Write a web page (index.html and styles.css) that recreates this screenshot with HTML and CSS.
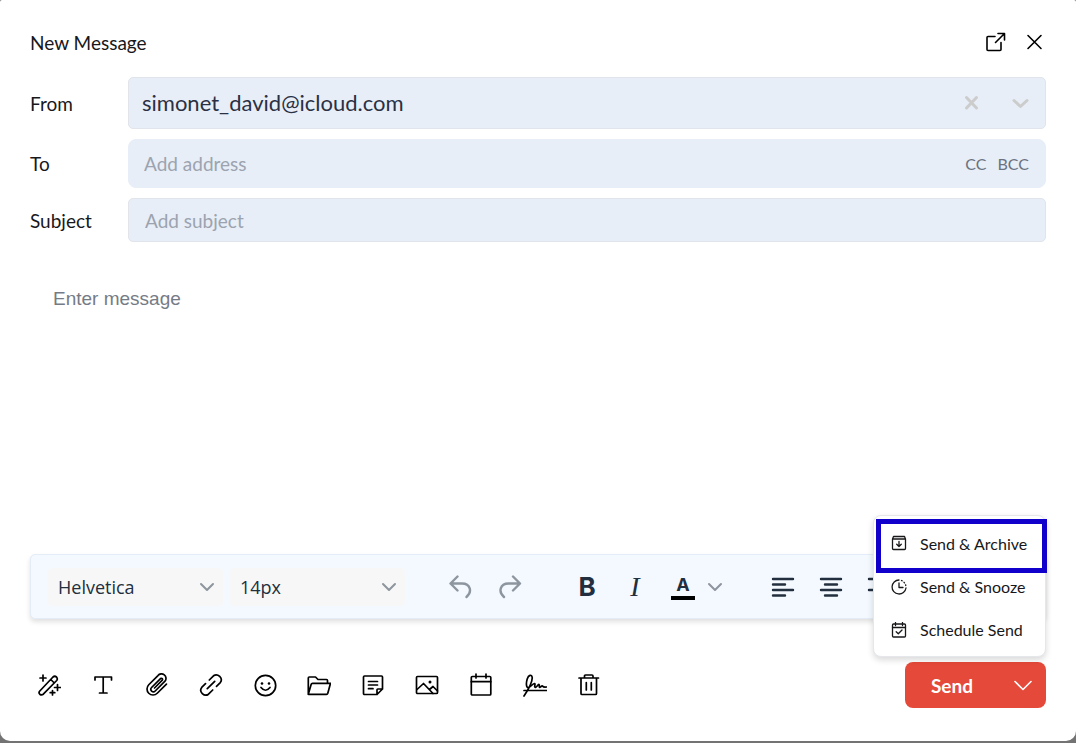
FILE: index.html
```html
<!DOCTYPE html>
<html lang="en">
  <head>
    <meta charset="UTF-8" />
    <meta name="viewport" content="width=device-width, initial-scale=1.0" />
    <title>New Message</title>
    <link rel="stylesheet" href="styles.css" />
  </head>
  <body>
    <main class="composer">
      <header class="composer-header">
        <h1>New Message</h1>
        <div class="window-buttons">
          <button class="icon-button" type="button" aria-label="Open in new window">
            <svg class="icon" viewBox="0 0 24 24"><path d="M12 6.500H5Q4 6.500 4 7.500V19.500Q4 20.500 5 20.500H17Q18 20.500 18 19.500V12.500M15 3.500H21.500V10M21 4L12.500 12.500" /></svg>
          </button>
          <button class="icon-button" type="button" aria-label="Close">
            <svg class="icon" viewBox="0 0 24 24"><path d="M6 5.500L19 18.500M19 5.500L6 18.500" /></svg>
          </button>
        </div>
      </header>

      <!-- Address fields -->
      <div class="fields">
        <label for="from">From</label>
        <div class="field from-field">
          <select class="from-select" id="from">
            <option>simonet_david@icloud.com</option>
          </select>
          <div class="field-icons">
            <svg class="icon" viewBox="0 0 24 24"><path d="M7.500 6.500L17.500 17M17.500 6.500L7.500 17" /></svg>
            <svg class="icon" viewBox="0 0 24 24"><path d="M6 9.500L12.500 15.500L19 9.500" /></svg>
          </div>
        </div>

        <label for="to">To</label>
        <div class="field to-field">
          <input type="text" id="to" placeholder="Add address" />
          <button class="cc-button" type="button">CC</button>
          <button class="cc-button" type="button">BCC</button>
        </div>

        <label for="subject">Subject</label>
        <div class="field subject-field">
          <input type="text" id="subject" placeholder="Add subject" />
        </div>
      </div>

      <textarea class="message" aria-label="Message" placeholder="Enter message"></textarea>

      <!-- Formatting toolbar -->
      <div class="toolbar">
        <div class="toolbar-selects">
          <div class="select-box">
            <select aria-label="Font">
              <option>Helvetica</option>
            </select>
            <svg class="icon chevron" viewBox="0 0 16 16"><path d="M2 5L8 11L14 5" /></svg>
          </div>
          <div class="select-box">
            <select aria-label="Font size">
              <option>14px</option>
            </select>
            <svg class="icon chevron" viewBox="0 0 16 16"><path d="M2 5L8 11L14 5" /></svg>
          </div>
        </div>
        <div class="toolbar-group history">
          <button type="button" aria-label="Undo">
            <svg class="icon" viewBox="0 0 24 24"><path d="M8.500 1.500L1.500 8.500L8.500 15.500M2 8.500H13C21.500 8.500 23.500 17 17.500 22" /></svg>
          </button>
          <button type="button" aria-label="Redo">
            <svg class="icon" viewBox="0 0 24 24"><path d="M14 1.500L21 8.500L14 15.500M20.500 8.500H9.500C1 8.500 -1 17 5 22" /></svg>
          </button>
        </div>
        <div class="toolbar-group">
          <button class="bold" type="button" aria-label="Bold">B</button>
          <button class="italic" type="button" aria-label="Italic">I</button>
          <div class="color-picker">
            <button type="button" aria-label="Text color"><span class="text-color">A</span></button>
            <button class="color-toggle" type="button" aria-label="Choose color">
              <svg class="icon chevron" viewBox="0 0 16 16"><path d="M2 5L8 11L14 5" /></svg>
            </button>
          </div>
        </div>
        <div class="toolbar-group align">
          <button type="button" aria-label="Align left">
            <svg class="icon" viewBox="0 0 24 24"><path d="M2 4H22M2 9.500H14M2 15H22M2 20.500H14" /></svg>
          </button>
          <button type="button" aria-label="Align center">
            <svg class="icon" viewBox="0 0 24 24"><path d="M2 4H22M6 9.500H18M2 15H22M6 20.500H18" /></svg>
          </button>
          <button type="button" aria-label="Align right">
            <svg class="icon" viewBox="0 0 24 24"><path d="M2 4H22M10 9.500H22M2 15H22M10 20.500H22" /></svg>
          </button>
        </div>
      </div>

      <!-- Bottom actions -->
      <footer class="actions">
        <div class="action-icons">
          <button class="icon-button" type="button" aria-label="Write with AI">
            <svg class="icon" viewBox="0 0 24 24"><path d="M2.800 18L16 4Q17.700 2.500 19.500 4Q21 5.800 19.700 7.500L6.300 21.200Q4.500 22.500 2.800 21.200Q1.300 19.700 2.800 18ZM13.800 6.500L17.300 10M6 2V8M3 5H9M20.500 11.500V17.500M17.500 14.500H23.500M15.500 17.500V22M13.200 19.700H17.800" /></svg>
          </button>
          <button class="icon-button" type="button" aria-label="Text formatting">
            <svg class="icon" viewBox="0 0 24 24"><path d="M4 7V4H20.500V7M12.200 4V20M8.500 20H16" /></svg>
          </button>
          <button class="icon-button" type="button" aria-label="Attach file">
            <svg class="icon" viewBox="0 0 24 24"><path d="M21.440 11.050L12.250 20.240A6 6 0 0 1 3.760 11.750L12.950 2.560A4 4 0 0 1 20 8.200L10.200 18A2.500 2.500 0 0 1 6.600 14.500L15.500 5.600C17 4.800 18 6 17.300 7.200L9.500 15" /></svg>
          </button>
          <button class="icon-button" type="button" aria-label="Insert link">
            <svg class="icon" viewBox="0 0 24 24"><path d="M10.300 7L14.500 2.800C18.700 -.200 24.500 5.200 21.300 9.600L17.500 13.300M13.700 17L9.500 21.200C5.300 24.200 -.500 18.800 2.700 14.400L6.500 10.700M8.300 15.700L15.700 8.300" /></svg>
          </button>
          <button class="icon-button" type="button" aria-label="Insert emoji">
            <svg class="icon" viewBox="0 0 24 24"><circle cx="12.500" cy="12.500" r="10.200" /><path d="M8 14.500Q12.500 20 17 14.500" /><circle class="dot" cx="9" cy="10.500" r="1.300" /><circle class="dot" cx="16" cy="10.500" r="1.300" /></svg>
          </button>
          <button class="icon-button" type="button" aria-label="Open files">
            <svg class="icon" viewBox="0 0 24 24"><path d="M1.300 21V5Q1.300 4 2.300 4H8.500L11 6.500H19.500Q20.500 6.500 20.500 7.500V10M1.300 21.300H19.500Q20.500 21.300 20.800 20.300L23.500 10.300H5.500Q4.500 10.300 4.200 11.300Z" /></svg>
          </button>
          <button class="icon-button" type="button" aria-label="Insert template">
            <svg class="icon" viewBox="0 0 24 24"><path d="M16 21.500H3.500Q2.500 21.500 2.500 20.500V4Q2.500 3 3.500 3H20.500Q21.500 3 21.500 4V16ZM16 21.500V16.800Q16 16 16.800 16H21.500M7.500 8.500H16.500M7.500 12H16.500M7.500 15.700H12" /></svg>
          </button>
          <button class="icon-button" type="button" aria-label="Insert image">
            <svg class="icon" viewBox="0 0 24 24"><rect x="1.500" y="3.500" width="21" height="17" rx="1" /><path d="M2 16.500L8.500 10.500L18 20.500M14.500 16.500L18 13.500L22.500 18" /><circle class="dot" cx="15" cy="9" r="1.500" /></svg>
          </button>
          <button class="icon-button" type="button" aria-label="Insert event">
            <svg class="icon" viewBox="0 0 24 24"><rect x="2.300" y="3.500" width="19.500" height="18.500" rx="1" /><path d="M2.300 8.700H21.800M7 1V5M17 1V5" /></svg>
          </button>
          <button class="icon-button" type="button" aria-label="Insert signature">
            <svg class="icon" viewBox="0 0 24 24"><path d="M1 17.500H24M1 23C5 17 9.500 9 9.200 4.500C8.700 1 5.500 2 4.200 6C3 10 3 15 5.500 14.500C8 14 9 11 11.500 10.500C13 10.500 10.500 14.500 12.500 14.300C14 14 15 11 16 11.500C17 12 15.500 14.500 17 14.300C18 14 18.500 12.500 19.500 13Q20.500 14.500 23.500 14" /></svg>
          </button>
          <button class="icon-button" type="button" aria-label="Discard draft">
            <svg class="icon" viewBox="0 0 24 24"><path d="M2 5H21.500M4 5V20.500Q4 21.500 5 21.500H18.500Q19.500 21.500 19.500 20.500V5M7.500 5V3Q7.500 2 8.500 2H15Q16 2 16 3V5M9.300 9.500V17M14.300 9.500V17" /></svg>
          </button>
        </div>

        <div class="send">
          <button class="send-button" type="button">Send</button>
          <button class="send-toggle" type="button" aria-label="More send options">
            <svg class="icon" viewBox="0 0 24 24"><path d="M4 8.500L12 16.500L20 8.500" /></svg>
          </button>
          <div class="send-menu">
            <button class="menu-item highlighted" type="button">
              <svg class="icon" viewBox="0 0 16 16"><path d="M1.500 4V13.500Q1.500 14.500 2.500 14.500H13.500Q14.500 14.500 14.500 13.500V4ZM1.500 4L2.500 1.500H13.500L14.500 4M8 6.500V11.500M5.700 9.300L8 11.500L10.300 9.300" /></svg>
              Send &amp; Archive
            </button>
            <button class="menu-item" type="button">
              <svg class="icon" viewBox="0 0 16 16"><path d="M8 1A7 7 0 1 0 15 9M8 4V8.500H12M10.500 1.500L11.200 1.800M13 3.300L13.500 3.900M14.600 5.800L14.800 6.500" /></svg>
              Send &amp; Snooze
            </button>
            <button class="menu-item" type="button">
              <svg class="icon" viewBox="0 0 16 16"><rect x="1.500" y="2" width="13" height="13" rx="1" /><path d="M1.500 5.500H14.500M4.500 .500V3.500M11.500 .500V3.500M5.200 9.700L7.300 11.800L11 8" /></svg>
              Schedule Send
            </button>
          </div>
        </div>
      </footer>
    </main>
  </body>
</html>
```
FILE: styles.css
```css
* {
  box-sizing: border-box;
}
body {
  margin: 0;
  padding-bottom: 2px;
  min-height: 100vh;
  display: flex;
  background-color: #737373;
  font-family: Lato, sans-serif;
  font-size: 19px;
  color: #18181b;
}
button,
input,
select,
textarea {
  font: inherit;
  color: inherit;
  border: none;
  background: none;
  padding: 0;
  margin: 0;
  outline: none;
}
button {
  cursor: pointer;
}
.icon {
  width: 24px;
  height: 24px;
  display: block;
  flex: none;
  fill: none;
  stroke: currentColor;
  stroke-width: 1.6;
  stroke-linecap: round;
  stroke-linejoin: round;
}
.icon .dot {
  fill: currentColor;
  stroke: none;
}
.icon-button {
  width: 24px;
  height: 24px;
  color: #000;
}
.composer {
  flex: 1;
  display: flex;
  flex-direction: column;
  padding: 30px 30px 33px;
  background-color: white;
  border-radius: 2px 2px 10px 10px;
}
.composer-header {
  display: flex;
  justify-content: space-between;
  margin-bottom: 21px;
}
.composer-header h1 {
  margin: 0;
  font-size: 19px;
  font-weight: 400;
  line-height: 26px;
}
.window-buttons {
  display: flex;
  gap: 15px;
}
.fields {
  display: grid;
  grid-template-columns: 98px 1fr;
  row-gap: 10px;
  align-items: center;
}
.field {
  display: flex;
  align-items: center;
  background-color: #e7eef7;
  border: 1px solid #e1e5eb;
  border-radius: 5px;
}
.field input {
  flex: 1;
  min-width: 0;
}
.field input::placeholder {
  color: #9ca3af;
  opacity: 1;
}
.from-field {
  display: grid;
  height: 52px;
  color: #2b3044;
}
.from-select,
.field-icons {
  grid-area: 1 / 1;
}
.from-select {
  appearance: none;
  height: 50px;
  padding: 0 0 2px 13px;
  font-size: 22px;
}
.field-icons {
  justify-self: end;
  display: flex;
  align-items: center;
  gap: 25px;
  padding-right: 13px;
  color: #ccc;
  pointer-events: none;
}
.field-icons .icon {
  stroke-width: 3;
}
.to-field {
  height: 49px;
  padding: 0 16px 0 15px;
  gap: 11px;
  border-color: #e7eef7;
  border-radius: 8px;
}
.cc-button {
  font-size: 16px;
  color: #6b7280;
}
.subject-field {
  height: 44px;
  padding: 0 16px;
}
.message {
  flex: 1;
  min-height: 120px;
  padding: 45px 23px;
  resize: none;
  font-family: "Liberation Sans", Arial, sans-serif;
  font-size: 19px;
  line-height: 24px;
}
.message::placeholder {
  color: #757b85;
  opacity: 1;
}

/* Formatting toolbar */
.toolbar {
  display: flex;
  align-items: center;
  gap: 36px;
  height: 65px;
  padding-left: 17px;
  overflow: hidden;
  background-color: #f4f8ff;
  border: 1px solid #e4ecf7;
  border-radius: 5px;
  box-shadow: 0 3px 5px rgba(0, 0, 0, 0.12);
  color: #222f3e;
}
.toolbar-selects {
  display: flex;
  gap: 7px;
}
.select-box {
  display: grid;
  align-items: center;
  width: 175px;
  height: 38px;
  background-color: #f7f7f7;
  border-radius: 4px;
}
.select-box select,
.select-box .icon {
  grid-area: 1 / 1;
}
.select-box select {
  appearance: none;
  height: 38px;
  padding-left: 10px;
  font-family: "Open Sans", sans-serif;
  font-size: 18px;
}
.select-box .icon {
  justify-self: end;
  margin-right: 8px;
  pointer-events: none;
}
.chevron {
  width: 16px;
  height: 16px;
  color: #8d959e;
  stroke-width: 2;
}
.toolbar-group {
  display: flex;
  gap: 8px;
}
.toolbar-group button {
  display: flex;
  align-items: center;
  justify-content: center;
  width: 40px;
  height: 38px;
}
.history {
  gap: 10px;
  color: #8d959e;
}
.history .icon,
.align .icon {
  stroke-width: 2.4;
}
.bold {
  font-family: Inter, sans-serif;
  font-size: 26px;
  font-weight: 700;
}
.italic {
  font-family: "Liberation Serif", serif;
  font-size: 28px;
  font-style: italic;
}
.color-picker {
  display: flex;
}
.toolbar-group .color-toggle {
  width: 24px;
}
.text-color {
  width: 24px;
  border-bottom: 4px solid #000;
  font-family: Inter, sans-serif;
  font-size: 18px;
  font-weight: 700;
  line-height: 22px;
}

/* Bottom actions */
.actions {
  display: flex;
  justify-content: space-between;
  align-items: center;
  margin-top: 43px;
  padding-left: 7px;
}
.action-icons {
  display: flex;
  gap: 30px;
}
.action-icons .icon {
  stroke-width: 1.7;
}
.send {
  position: relative;
  display: flex;
  height: 46px;
  background-color: #e54939;
  border-radius: 8px;
  color: white;
}
.send-button {
  width: 94px;
  font-size: 19px;
  font-weight: 700;
}
.send-toggle {
  width: 47px;
  display: flex;
  align-items: center;
  justify-content: center;
}
.send-menu {
  position: absolute;
  right: 0;
  bottom: calc(100% + 5px);
  width: 173px;
  padding: 3px 0 5px 2px;
  background-color: white;
  border: 1px solid #e5e7eb;
  border-radius: 8px;
  box-shadow: 0 3px 6px rgba(0, 0, 0, 0.15);
  color: #18181b;
}
.menu-item {
  display: flex;
  align-items: center;
  gap: 13px;
  width: 100%;
  height: 43px;
  padding-left: 15px;
  font-size: 16px;
  white-space: nowrap;
}
.menu-item .icon {
  width: 16px;
  height: 16px;
  stroke-width: 1.3;
}
.menu-item.highlighted {
  width: 171px;
  height: 54px;
  margin-bottom: -8px;
  padding: 0 0 6px 10px;
  border: 5px solid #1100cc;
}
```
